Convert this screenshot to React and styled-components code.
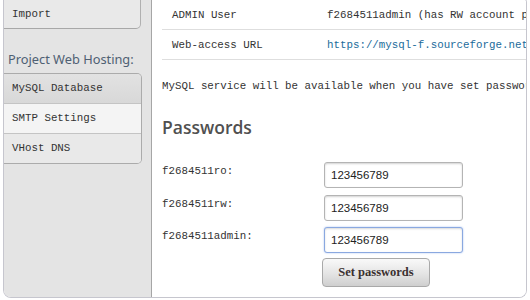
import React from "react";
import styled, { createGlobalStyle } from "styled-components";

const GlobalStyle = createGlobalStyle`
  html, body {
    margin: 0;
    padding: 0;
    background: #fff;
    overflow: hidden;
  }
`;

const Frame = styled.div`
  margin: -6px 3px 0 3px;
  height: 296px;
  padding-top: 6px;
  display: grid;
  grid-template-columns: 148px 1fr;
  border: 1px solid #c6c6ce;
  border-top-color: transparent;
  border-radius: 0 9px 8px 8px;
  overflow: hidden;
  box-sizing: content-box;
  font-family: "Liberation Mono", "DejaVu Sans Mono", monospace;
  font-size: 10.8px;
  color: #333;
`;

const Sidebar = styled.div`
  background: #e4e4e4;
  border-right: 1px solid #a6a6a6;
  box-sizing: border-box;
  margin-top: -6px;
`;

const ImportItem = styled.div`
  width: 137px;
  height: 34px;
  box-sizing: border-box;
  background: #e9e9e9;
  border-right: 1px solid #b0b0b0;
  border-bottom: 1px solid #a8a8a8;
  border-bottom-right-radius: 5px;
  padding: 13px 0 0 8px;
`;

const SideHeading = styled.div`
  font-family: "Noto Sans", "Open Sans", sans-serif;
  font-size: 12.8px;
  color: #4f6073;
  padding: 21px 0 0 4px;
  height: 22px;
`;

const Menu = styled.div`
  margin-top: 1px;
  width: 137px;
  border: 1px solid #ababab;
  border-left: none;
  border-radius: 0 5px 5px 0;
  overflow: hidden;
`;

const MenuItem = styled.div`
  height: 29px;
  line-height: 29px;
  padding-left: 8px;
  background: ${(p) =>
    p.$active
      ? "linear-gradient(#e2e2e2, #d8d8d8)"
      : p.$light
      ? "#f4f4f4"
      : "#e9e9e9"};
  border-top: ${(p) => (p.$first ? "none" : "1px solid #c4c4c4")};
`;

const Main = styled.div`
  background: #fff;
  padding: 0 0 0 10px;
  overflow: hidden;
  white-space: nowrap;
`;

const InfoTable = styled.div`
  margin-top: -1px;
`;

const InfoRow = styled.div`
  display: grid;
  grid-template-columns: 155px 1fr;
  height: 29px;
  line-height: 30px;
  padding-left: 10px;
  border-bottom: 1px solid #dedede;
`;

const Link = styled.a`
  color: #1b6c9b;
  text-decoration: none;
`;

const Note = styled.p`
  margin: 18px 0 0 0;
  line-height: 16px;
`;

const Heading = styled.h2`
  font-family: "Open Sans", "Noto Sans", sans-serif;
  font-weight: 600;
  font-size: 17.5px;
  color: #505050;
  margin: 21px 0 0 0;
  line-height: 24px;
`;

const Form = styled.div`
  margin-top: 23px;
  display: grid;
  grid-template-columns: 162px 139px;
  row-gap: 6.5px;
`;

const Label = styled.label`
  line-height: 16px;
  padding-top: 1px;
`;

const Input = styled.input`
  width: 139px;
  height: 26px;
  box-sizing: border-box;
  border: 1px solid ${(p) => (p.$focused ? "#8aa8e0" : "#b4b4b4")};
  border-radius: 3px;
  box-shadow: ${(p) =>
    p.$focused
      ? "0 0 2px #a8c0f0, inset 0 1px 2px rgba(0,0,0,0.15)"
      : "inset 0 1px 2px rgba(0,0,0,0.18)"};
  padding: 0 6px;
  font-family: "Liberation Sans", Arial, sans-serif;
  font-size: 11.5px;
  color: #222;
  outline: none;
`;

const Button = styled.button`
  grid-column: 2;
  margin: -2px 0 0 -2px;
  width: 108px;
  height: 29px;
  border: 1px solid #a9a9a9;
  border-radius: 4px;
  background: linear-gradient(#f9f9f9, #e4e4e4 55%, #cfcfcf);
  font-family: "Liberation Serif", "Times New Roman", serif;
  font-weight: bold;
  font-size: 12.5px;
  color: #3a3030;
  padding: 0;
`;

export default function App() {
  const accounts = ["f2684511ro:", "f2684511rw:", "f2684511admin:"];
  return (
    <>
      <GlobalStyle />
      <Frame>
        <Sidebar>
          <ImportItem>Import</ImportItem>
          <SideHeading>Project Web Hosting:</SideHeading>
          <Menu>
            <MenuItem $active $first>MySQL Database</MenuItem>
            <MenuItem $light>SMTP Settings</MenuItem>
            <MenuItem>VHost DNS</MenuItem>
          </Menu>
        </Sidebar>
        <Main>
          <InfoTable>
            <InfoRow>
              <span>ADMIN User</span>
              <span>f2684511admin (has RW account privileges)</span>
            </InfoRow>
            <InfoRow>
              <span>Web-access URL</span>
              <Link href="#">https://mysql-f.sourceforge.net/</Link>
            </InfoRow>
          </InfoTable>
          <Note>
            MySQL service will be available when you have set passwords for
            all accounts.
          </Note>
          <Heading>Passwords</Heading>
          <Form>
            {accounts.map((name, i) => (
              <React.Fragment key={name}>
                <Label>{name}</Label>
                <Input
                  type="text"
                  defaultValue="123456789"
                  $focused={i === 2}
                />
              </React.Fragment>
            ))}
            <Button>Set passwords</Button>
          </Form>
        </Main>
      </Frame>
    </>
  );
}
